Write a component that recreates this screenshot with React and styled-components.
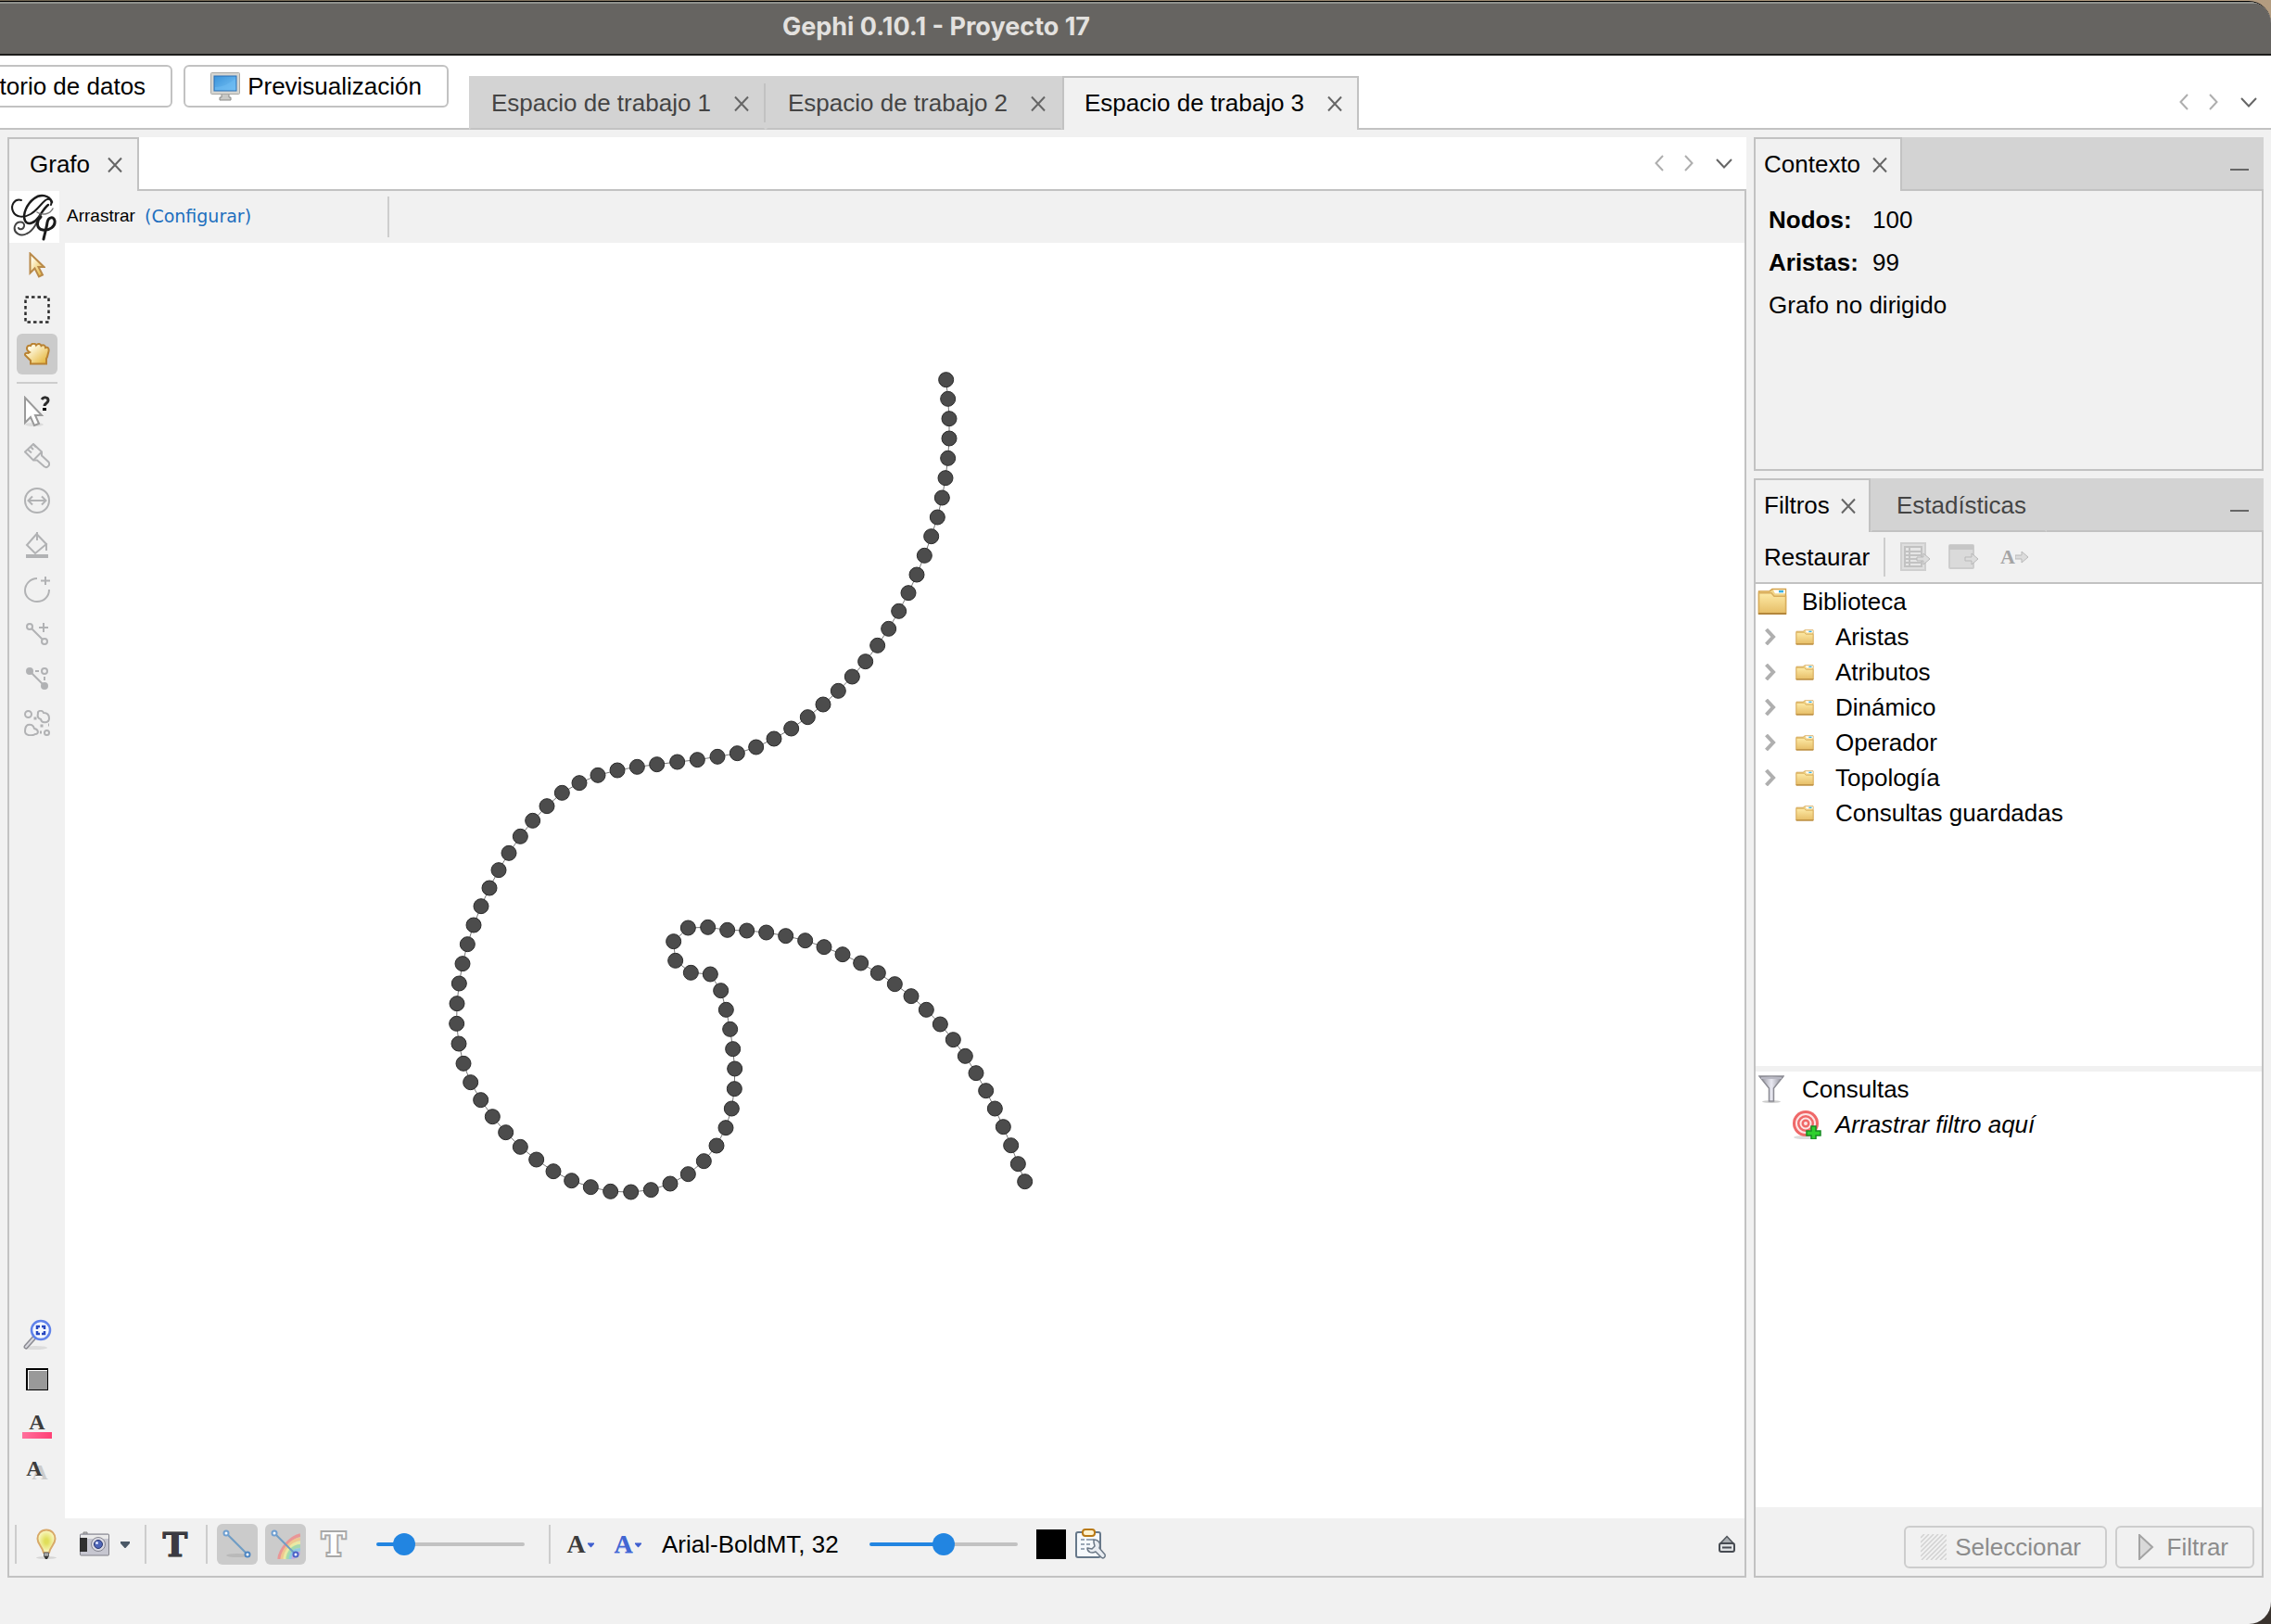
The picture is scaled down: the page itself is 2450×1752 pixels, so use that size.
import React, { useState } from "react";
import styled, { createGlobalStyle, css } from "styled-components";

const LINE = "#c2c2c2";
const FACE = "#f1f1f1";
const SHADE = "#d3d3d3";
const BLUE = "#2285e1";
const GLYPH = "#b1b2b4";

const GlobalStyle = createGlobalStyle`
  *, *::before, *::after { box-sizing: border-box; }
  body {
    margin: 0;
    font-family: "Liberation Sans", Arial, sans-serif;
    font-size: 26px;
    line-height: 30px;
    color: #000;
  }
  button, input { font: inherit; color: inherit; }
  svg { display: block; flex: none; }
`;

/* ---------- window ---------- */

const Desktop = styled.div`
  min-height: 100vh;
  padding-top: 1px;
  display: flex;
  background: linear-gradient(90deg, #6f6451, #b39c80) top / 100% 50% no-repeat, #3a332e;
`;

const Window = styled.div`
  flex: 1;
  min-width: 0;
  display: flex;
  flex-direction: column;
  overflow: hidden;
  border-top: 1px solid #000;
  border-radius: 0 24px 24px 0;
  background: ${FACE};
`;

const TitleBar = styled.header`
  height: 58px;
  padding-right: 430px;
  display: flex;
  align-items: center;
  justify-content: center;
  border-top: 2px solid #8f918c;
  border-bottom: 2px solid #1c1c1b;
  background: #666461;
`;

const Title = styled.h1`
  margin: 0 0 4px;
  font: 700 27px/30px Inter, sans-serif;
  color: #e3e1df;
`;

const TopBar = styled.div`
  height: 80px;
  display: flex;
  align-items: flex-end;
  background: #fff;
  box-shadow: inset 0 -2px ${LINE};
`;

const Modes = styled.nav`
  width: 484px;
  margin: 0 22px 24px 0;
  display: flex;
  justify-content: flex-end;
  gap: 12px;
  overflow: hidden;
`;

const PushButton = styled.button`
  flex: none;
  height: 46px;
  padding: 0 27px;
  display: flex;
  align-items: center;
  gap: 8px;
  border: 2px solid ${LINE};
  border-radius: 6px;
  background: #fff;
  white-space: nowrap;
`;

/* ---------- tabs ---------- */

const TabStrip = styled.div`
  flex: ${(p) => (p.$grow ? 1 : "none")};
  height: 58px;
  display: flex;
  background: ${(p) => (p.$shaded ? SHADE : "#fff")};
  box-shadow: inset 0 -2px ${LINE};
`;

const TabBox = styled.div`
  min-width: ${(p) => p.$width}px;
  padding: 0 ${(p) => (p.$wide ? 16 : 14)}px 2px ${(p) => (p.$wide ? 22 : 9)}px;
  display: flex;
  align-items: center;
  justify-content: space-between;
  border: 2px solid ${LINE};
  border-bottom: 0;
  background: ${FACE};
  ${(p) =>
    !p.$active &&
    css`
      padding-bottom: 0;
      border: 2px solid ${SHADE};
      border-bottom-color: ${LINE};
      background: ${SHADE};
      color: #444;
    `}
  ${(p) =>
    !p.$closable &&
    css`
      justify-content: center;
    `}
`;

const TabDivider = styled.span`
  align-self: flex-start;
  flex: none;
  width: 2px;
  height: 42px;
  margin: 8px 0 0 -2px;
  background: ${LINE};
`;

const TabButton = styled.button`
  padding: 0;
  border: 0;
  background: none;
  white-space: nowrap;
`;

const CloseButton = styled.button`
  padding: 2px 0 0;
  border: 0;
  background: none;
`;

const StripTools = styled.div`
  margin-left: auto;
  padding: 0 ${(p) => (p.$inset ? 4 : 2)}px 2px 0;
  height: 58px;
  display: flex;
  align-items: center;
`;

const StripButton = styled.button`
  width: ${(p) => (p.$wide ? 44 : 32)}px;
  height: 40px;
  padding: 0;
  display: grid;
  place-items: center;
  border: 0;
  background: none;
`;

/* ---------- panels ---------- */

const Workspace = styled.main`
  flex: 1;
  padding: 8px 8px 50px;
  display: grid;
  grid-template-columns: minmax(0, 1fr) 550px;
  gap: 8px;
`;

const SideColumn = styled.div`
  display: flex;
  flex-direction: column;
  gap: 8px;
`;

const Panel = styled.section`
  flex: ${(p) => (p.$height ? "none" : 1)};
  min-height: ${(p) => p.$height || 0}px;
  display: flex;
  flex-direction: column;
`;

const PanelBody = styled.div`
  flex: 1;
  display: flex;
  flex-direction: column;
  border: 2px solid ${LINE};
  border-top: 0;
`;

const ToolOptions = styled.div`
  height: 56px;
  display: flex;
  align-items: center;
  font-size: 19px;
  line-height: 24px;
`;

const LogoBox = styled.div`
  width: 54px;
  height: 56px;
  display: grid;
  place-items: center;
  background: #fff;
`;

const ToolName = styled.span`
  width: 74px;
  margin: 0 10px 2px 8px;
`;

const ConfigLink = styled.a`
  width: 262px;
  margin-bottom: 2px;
  font-family: "DejaVu Sans", sans-serif;
  color: #1d6fbe;
  text-decoration: none;
`;

const Rule = styled.span`
  flex: none;
  width: 2px;
  height: ${(p) => p.$height || 42}px;
  margin: 0 ${(p) => p.$space || 0}px;
  background: #cdcdcd;
`;

const GraphArea = styled.div`
  flex: 1;
  display: flex;
`;

const ToolColumn = styled.div`
  width: 60px;
  padding: 2px 8px 32px;
  display: flex;
  flex-direction: column;
  gap: 4px;
`;

const ColumnRule = styled.span`
  height: 2px;
  margin: 4px 0;
  background: #cdcdcd;
`;

const Spring = styled.span`
  flex: 1;
`;

const IconButton = styled.button`
  flex: none;
  width: ${(p) => p.$width || 44}px;
  height: 44px;
  padding: 0;
  display: grid;
  place-items: center;
  border: 0;
  border-radius: 6px;
  background: ${(p) => (p["aria-pressed"] ? "#cbcbcb" : "none")};
`;

const Canvas = styled.div`
  flex: 1;
  min-width: 0;
  display: grid;
  background: #fff;
`;

const BottomBar = styled.div`
  height: 62px;
  padding: 6px 6px 12px;
  display: flex;
  align-items: center;
`;

const Group = styled.div`
  display: flex;
  align-items: center;
  gap: ${(p) => p.$gap || 0}px;
`;

const Range = styled.input`
  appearance: none;
  width: 160px;
  height: 24px;
  margin: 0 ${(p) => p.$after}px 0 ${(p) => p.$before}px;
  background: none;
  &::-webkit-slider-runnable-track {
    height: 4px;
    border-radius: 2px;
    background: linear-gradient(90deg, ${BLUE} ${(p) => p.$fill}%, ${LINE} 0);
  }
  &::-webkit-slider-thumb {
    appearance: none;
    width: 24px;
    height: 24px;
    margin-top: -10px;
    border-radius: 50%;
    background: ${BLUE};
  }
`;

const FontButton = styled.button`
  padding: 0;
  margin-left: 18px;
  width: 194px;
  border: 0;
  background: none;
  white-space: nowrap;
  text-align: left;
`;

const Swatch = styled.button`
  width: 32px;
  height: 32px;
  margin-right: 4px;
  padding: 0;
  border: 0;
  background: #000;
`;

/* Serif letters used as toolbar symbols */
const Letter = styled.span`
  font: bold ${(p) => p.$size}px/${(p) => p.$size - 4}px ${(p) => (p.$slab ? '"DejaVu Serif"' : '"Liberation Serif"')}, serif;
  color: ${(p) => p.$color || "#3c3c3c"};
  text-shadow: ${(p) => p.$shadow || "none"};
  -webkit-text-stroke: ${(p) => p.$stroke || "0"};
  paint-order: stroke fill;
`;

const LetterStack = styled.span`
  padding-top: 4px;
  display: grid;
  justify-items: center;
  gap: 1px;
`;

const Underline = styled.span`
  width: 32px;
  height: 7px;
  background: linear-gradient(90deg, #ff6f9c, #ff4075);
`;

const LetterMenu = styled.span`
  display: flex;
  align-items: center;
  gap: ${(p) => p.$gap || 0}px;
`;

/* ---------- side panels ---------- */

const Facts = styled.dl`
  margin: 0;
  padding: 8px 14px;
  display: grid;
  grid-template-columns: 112px 1fr;
  line-height: 46px;
`;

const Fact = styled.dt`
  font-weight: bold;
`;

const Value = styled.dd`
  margin: 0;
`;

const Note = styled.dd`
  grid-column: 1 / -1;
  margin: 0;
`;

const FilterBar = styled.div`
  height: 56px;
  padding-left: 9px;
  display: flex;
  align-items: center;
  border-bottom: 2px solid ${LINE};
`;

const TextButton = styled.button`
  width: 129px;
  padding: 0;
  border: 0;
  background: none;
  text-align: left;
`;

const Tree = styled.ul`
  flex: ${(p) => p.$share} 1 0;
  margin: 0;
  padding: 0;
  list-style: none;
  background: #fff;
`;

const TreeRow = styled.li`
  height: 38px;
  display: grid;
  grid-template-columns: ${(p) => (p.$child ? "30px 56px 1fr" : "50px 1fr")};
  align-items: center;
  font-style: ${(p) => (p.$italic ? "italic" : "normal")};
`;

const Cell = styled.span`
  display: grid;
  place-items: center;
  width: ${(p) => p.$width}px;
`;

const Expander = styled.button`
  padding: 0;
  width: 32px;
  height: 30px;
  display: grid;
  place-items: center;
  border: 0;
  background: none;
`;

const Splitter = styled.div`
  height: 6px;
`;

const FilterFooter = styled.div`
  padding: 20px 8px 8px;
  display: flex;
  justify-content: flex-end;
  gap: 9px;
`;

const DisabledButton = styled(PushButton)`
  min-width: ${(p) => p.$width}px;
  padding: 0 26px 0 ${(p) => p.$start}px;
  justify-content: space-between;
  border-color: #cdcdcd;
  background: none;
  color: #8c8c8c;
`;

/* ---------- drawings ---------- */

const Gradients = () => (
  <svg width="0" height="0" aria-hidden="true">
    <defs>
      <linearGradient id="gold" x1="0" y1="0" x2="1" y2="1">
        <stop offset="0.2" stopColor="#fffbe6" />
        <stop offset="1" stopColor="#e2ad25" />
      </linearGradient>
      <linearGradient id="folder" x1="0" y1="0" x2="0" y2="1">
        <stop offset="0" stopColor="#fdeaa6" />
        <stop offset="1" stopColor="#e6bd66" />
      </linearGradient>
      <linearGradient id="screen" x1="0" y1="0" x2="1" y2="1">
        <stop offset="0" stopColor="#3a93da" />
        <stop offset="1" stopColor="#79c3f5" />
      </linearGradient>
      <linearGradient id="metal" x1="0" y1="0" x2="1" y2="0">
        <stop offset="0" stopColor="#85858f" />
        <stop offset="0.5" stopColor="#e9e9f2" />
        <stop offset="1" stopColor="#85858f" />
      </linearGradient>
      <radialGradient id="glow">
        <stop offset="0.2" stopColor="#e0de5a" />
        <stop offset="1" stopColor="#fbf8c6" />
      </radialGradient>
    </defs>
  </svg>
);

const Cross = () => (
  <svg width="16" height="18" viewBox="0 0 16 18" fill="none" stroke="#666" strokeWidth="2">
    <path d="M1 1.500L15 16.500M15 1.500L1 16.500" />
  </svg>
);

const Previous = () => (
  <svg width="10" height="18" viewBox="0 0 10 18" fill="none" stroke="#aeaeae" strokeWidth="2">
    <path d="M9 1L1.500 9L9 17" />
  </svg>
);

const Next = () => (
  <svg width="10" height="18" viewBox="0 0 10 18" fill="none" stroke="#aeaeae" strokeWidth="2">
    <path d="M1 1L8.500 9L1 17" />
  </svg>
);

const Down = () => (
  <svg width="18" height="11" viewBox="0 0 18 11" fill="none" stroke="#666" strokeWidth="2">
    <path d="M1 1L9 9.500L17 1" />
  </svg>
);

const Minimize = () => (
  <svg width="20" height="18" viewBox="0 0 20 18">
    <path d="M0 15h20v2H0z" fill="#666" />
  </svg>
);

const Caret = ({ color = "#4a5866", size = 10 }) => (
  <svg width={size} height={size} viewBox="0 0 10 10">
    <path d="M0 2h10v2L5.500 9h-1L0 4z" fill={color} />
  </svg>
);

const Monitor = () => (
  <svg width="32" height="32" viewBox="0 0 32 32">
    <path d="M12 24h8v4h2v3H10v-3h2z" fill="#c9c9c6" stroke="#8a8a87" />
    <rect x="0.5" y="1.5" width="31" height="23" rx="1" fill="#d6d6d2" stroke="#a9a9a5" />
    <rect x="4" y="5" width="24" height="16" fill="url(#screen)" stroke="#2a6fb4" />
    <path d="M5 17c9 0 15-4 22-9v12H5z" fill="#6dbbf2" opacity="0.6" />
  </svg>
);

const Logo = () => (
  <svg width="54" height="54" viewBox="0 0 54 54" fill="none" stroke="#1b1b1b" strokeLinecap="round">
    <path d="M13 9C6 7 1 14 4 21C7 28 16 28 23 24C30 20 34 13 39 9C43 6 47 9 45 14" strokeWidth="2" />
    <path d="M46 11C43 3 33 2 27 7C19 13 14 24 17 31C20 37 28 33 32 27C36 21 38 17 42 14" strokeWidth="2.500" />
    <path d="M47 18C44 24 36 26 30 22" strokeWidth="1.500" stroke="#777" />
    <path d="M34 24C30 33 26 42 19 45C12 49 4 44 6 37C8 31 17 31 16 37C15 41 11 41 10 39" strokeWidth="2" stroke="#444" />
    <path d="M34 27C29 31 29 40 36 41C44 42 50 37 49 31C48 26 42 27 41 33C40 40 38 46 37 51" strokeWidth="3" />
  </svg>
);

const Pointer = () => (
  <svg width="18" height="28" viewBox="0 0 18 28">
    <path d="M1.500 1.500v21l5-5l4.500 9l4-2l-4.500-8.500h6z" fill="url(#gold)" stroke="#b98a4a" strokeWidth="2" />
  </svg>
);

const Marquee = () => (
  <svg width="28" height="30" viewBox="0 0 28 30">
    <rect x="1.5" y="1.5" width="25" height="27" fill="none" stroke="#2b2b2b" strokeWidth="2.500" strokeDasharray="3.500 3" />
  </svg>
);

const Hand = () => (
  <svg width="28" height="24" viewBox="0 0 28 24">
    <path
      d="M7 22.500V19L1.500 13.500C0 12 2 10 4.500 11L6 10C1 7 3 2 7 3C8 0 12 0 13 2.500C15 0 18 1 18.500 3C21 1 23 3 23 5C26 4 27 6 26.500 9L25 15l-1 2v5.500z"
      fill="url(#gold)"
      stroke="#b98232"
      strokeWidth="2"
    />
  </svg>
);

const HelpPointer = () => (
  <svg width="30" height="34" viewBox="0 0 30 34">
    <ellipse cx="12" cy="31" rx="10" ry="2" fill="#ddd" />
    <path d="M2 2v27l6-6l4 9l5-2l-4-9h7z" fill="#fff" stroke="#9a9a9a" strokeWidth="2" />
    <path d="M20 4c2-3 7-3 7 1c0 3-4 3-4 6" fill="none" stroke="#2c2c2c" strokeWidth="3" />
    <path d="M21 13h4v3h-4z" fill="#000" />
  </svg>
);

const Line = ({ children }) => (
  <svg width="28" height="28" viewBox="0 0 28 28" fill="none" stroke={GLYPH} strokeWidth="2">
    {children}
  </svg>
);

const Brush = () => (
  <Line>
    <path d="M1 9.500L10 1l9 8.500v4l7.500 7c2 3-1.500 7-4.500 5l-8-7h-4z" />
    <path d="M19 9.500l-9 9M4 7l4 3.500M7 4l3 3M10 1.500l3 3" />
  </Line>
);

const Sizer = () => (
  <Line>
    <circle cx="14" cy="14" r="13" />
    <path d="M4.500 14h19M9 9.500L4.500 14L9 18.500M19 9.500l4.500 4.500L19 18.500" />
  </Line>
);

const Bucket = () => (
  <Line>
    <path d="M13.500 2L24 13L12 23L3 14zM14 0v9M24 12v8" />
    <path d="M2 26h24" strokeWidth="4" />
  </Line>
);

const AddNode = () => (
  <Line>
    <path d="M14 2C7 2 1 8 1 15s6 12 13 12s13-5 13-13M18 4.500h10M23 0v9" />
  </Line>
);

const AddEdge = () => (
  <Line>
    <circle cx="6" cy="6" r="3" />
    <circle cx="22" cy="22" r="3" />
    <path d="M8 8l12 12M16 7h10M21 2v10" />
  </Line>
);

const PathTool = () => (
  <Line>
    <circle cx="6" cy="6" r="3" fill={GLYPH} />
    <circle cx="22" cy="22" r="3" fill={GLYPH} />
    <circle cx="22" cy="6" r="3" />
    <path d="M8 8l12 12M12 6h4M22 12v4" />
  </Line>
);

const Clusters = () => (
  <Line>
    <circle cx="4.500" cy="4.500" r="3.500" />
    <circle cx="24.500" cy="24.500" r="2.500" />
    <path d="M15 4c-1-4 5-4 6-1c4 0 6 2 6 6c0 5-8 6-9 1c-3-1-4-3-3-6zM4 16c3-1 6 0 7 4c5 1 5 6 1 6c-3 2-11 2-11-3c0-4 1-6 3-7z" />
    <path d="M10.500 9h3M17.500 17h3M17 24h2M26 16h1" strokeWidth="3" />
  </Line>
);

const CenterGraph = () => (
  <svg width="32" height="34" viewBox="0 0 32 34">
    <ellipse cx="14" cy="31" rx="13" ry="2" fill="#dcdcdc" />
    <path d="M13 20L4 30" stroke="#8b8b92" strokeWidth="5" strokeLinecap="round" />
    <path d="M13 20L4 30" stroke="#d8d8de" strokeWidth="2" strokeLinecap="round" />
    <circle cx="20" cy="12" r="10" fill="#f4f8ff" stroke="#5f82ea" strokeWidth="2.500" />
    <path d="M16 11V8h3M21 8h3v3M24 13v3h-3M19 16h-3v-3" fill="none" stroke="#2647c0" strokeWidth="2.500" />
  </svg>
);

const ColorBox = () => (
  <svg width="24" height="24" viewBox="0 0 24 24">
    <rect width="24" height="24" fill="#000" />
    <rect x="2" y="2" width="21" height="21" fill="#fff" />
    <rect x="3" y="3" width="20" height="20" fill="#999" />
  </svg>
);

const Bulb = () => (
  <svg width="24" height="34" viewBox="0 0 24 34">
    <ellipse cx="12" cy="31.500" rx="11" ry="1.500" fill="#d5d5d5" />
    <path d="M12 1.500C6 1.500 2.500 6 2.500 11c0 6 5 8 6.500 15h6c1.500-7 6.500-9 6.500-15c0-5-3.500-9.500-9.500-9.500z" fill="url(#glow)" stroke="#d8a968" strokeWidth="2" />
    <path d="M9.500 26h5v4h-5z" fill="#aaa" stroke="#666" />
    <path d="M9.500 30h5l-1.500 3h-2z" fill="#333" />
  </svg>
);

const Camera = () => (
  <svg width="32" height="28" viewBox="0 0 32 28">
    <path d="M4 1h4v3H4z" fill="#bbb" stroke="#888" />
    <rect x="0.5" y="3" width="31" height="23" rx="1" fill="#c6c6d0" stroke="#808088" />
    <path d="M1 4h30v4H1z" fill="#eaeaea" />
    <path d="M0 7h8v15H0z" fill="#303030" />
    <circle cx="20" cy="14" r="7.500" fill="#d9d9e2" stroke="#85858f" />
    <circle cx="20" cy="14" r="4.500" fill="#4f66b8" stroke="#2b3770" />
    <circle cx="18.500" cy="12.500" r="1.500" fill="#dfe6ff" />
  </svg>
);

const RAINBOW = ["#ee8d8d", "#f4c787", "#eeee9d", "#9ddca8", "#86c9e6", "#c3a8e0"];

const EdgeIcon = ({ rainbow }) => (
  <svg width="32" height="32" viewBox="0 0 32 32" fill="none">
    {!rainbow && <ellipse cx="16" cy="28" rx="12" ry="2" fill="#b9b9b9" />}
    {rainbow &&
      RAINBOW.map((color, i) => (
        <path
          key={color}
          d={`M${9 + i * 3} 32C${10 + i * 3} ${22 + i} ${20 + i} ${9 + i * 3} 32 ${6 + i * 4}`}
          stroke={color}
          strokeWidth="3.500"
          opacity="0.85"
        />
      ))}
    <path d="M5 5l22 22" stroke="#6f9cc4" strokeWidth="2" />
    <circle cx="4" cy="4" r="2.500" fill="#fff" stroke="#6f9fd0" strokeWidth="2" />
    <circle cx="27" cy="27" r="2.500" fill="#fff" stroke={rainbow ? "#4a62c8" : "#4d86c2"} strokeWidth="2" />
  </svg>
);

const Clipboard = () => (
  <svg width="34" height="34" viewBox="0 0 34 34">
    <rect x="2" y="4" width="26" height="27" rx="2" fill="#f6f9fc" stroke="#66788a" strokeWidth="2" />
    <path d="M7 12h4M7 17h4M7 22h4M13 12h8M13 17h4" stroke="#9aa7b5" strokeWidth="2" />
    <rect x="9" y="1" width="13" height="7" rx="3" fill="#fff3cf" stroke="#b97a16" strokeWidth="2" />
    <path
      d="M21 12C26 12 29 16 27 21L33 28C34 31 31 33 29 31L23 25C19 27 14 26 14 21L19 22L22 19L21 15z"
      fill="#e9edf2"
      stroke="#6b7886"
      strokeWidth="1.500"
      strokeLinejoin="round"
    />
  </svg>
);

const Eject = () => (
  <svg width="20" height="20" viewBox="0 0 20 20">
    <path d="M10 1.500L17 9H3z" fill="#a9adb1" stroke="#50555b" strokeWidth="1.500" />
    <rect x="2" y="9" width="16" height="9" rx="2" fill="#dfe1e3" stroke="#474b52" strokeWidth="2" />
    <path d="M5 13.500h10" stroke="#474b52" strokeWidth="2" />
  </svg>
);

const Arrow = ({ x, y }) => (
  <path d={`M${x} ${y - 2}h7v-4l7 6l-7 6v-4h-7z`} fill="#dcdcdc" stroke="#b9b9b9" />
);

const ColumnsIcon = () => (
  <svg width="34" height="32" viewBox="0 0 34 32">
    <rect x="1" y="1" width="26" height="29" fill="#dedede" stroke="#cfcfcf" strokeWidth="2" />
    <path d="M5 5h18v21H5zM5 10h18M5 14h18M5 18h18M5 22h18M10 5v21" fill="#e6e6e6" stroke="#c2c2c2" strokeWidth="2" />
    <Arrow x={18} y={18} />
  </svg>
);

const WindowIcon = () => (
  <svg width="34" height="32" viewBox="0 0 34 32">
    <rect x="1" y="3" width="26" height="25" rx="1" fill="#dadada" stroke="#cdcdcd" strokeWidth="2" />
    <path d="M1 3h26v5H1z" fill="#c6c6c6" />
    <Arrow x={18} y={18} />
  </svg>
);

const ArrowIcon = () => (
  <svg width="14" height="16" viewBox="1 0 14 16">
    <Arrow x={1} y={8} />
  </svg>
);

const Folder = ({ width = 32, height = 30 }) => (
  <svg width={width} height={height} viewBox="0 0 32 31" preserveAspectRatio="none">
    <path d="M1.500 29V4H13l3-2.500h14.500V29z" fill="#f2d68a" stroke="#d3a24e" strokeWidth="1.500" />
    <path d="M17 2.500h13v4H19z" fill="#fff" />
    <path d="M23 3h5v2.500h-5z" fill="#36b2e4" />
    <path d="M1.500 29V6H15l3 3.500h12.500V29z" fill="url(#folder)" stroke="#d9ae5d" strokeWidth="1.500" />
    <path d="M1 29h30" stroke="#b1843a" strokeWidth="2" />
  </svg>
);

const Chevron = () => (
  <svg width="12" height="18" viewBox="0 0 12 18" fill="none" stroke="#afafaf" strokeWidth="4">
    <path d="M1.500 1L9 9L1.500 17" />
  </svg>
);

const Funnel = () => (
  <svg width="28" height="30" viewBox="0 0 28 30">
    <ellipse cx="14" cy="28.500" rx="10" ry="1.500" fill="#ccc" />
    <path d="M1 1h26L16.500 14v14h-5V14z" fill="url(#metal)" stroke="#8c8c94" strokeWidth="1.500" />
    <path d="M3 3h22" stroke="#b9b9c4" strokeWidth="2" />
  </svg>
);

const Target = () => (
  <svg width="32" height="32" viewBox="0 0 32 32">
    <ellipse cx="14" cy="30" rx="12" ry="2" fill="#ddd" />
    <circle cx="15" cy="15" r="14" fill="#ef6868" />
    <circle cx="15" cy="15" r="10" fill="none" stroke="#fde4e4" strokeWidth="2" />
    <circle cx="15" cy="15" r="5.500" fill="none" stroke="#fde4e4" strokeWidth="2" />
    <circle cx="15" cy="15" r="2" fill="#fde4e4" />
    <path d="M21 18h5v5h5v5h-5v4h-5v-4h-5v-5h5z" fill="#2fd02f" stroke="#198a24" strokeWidth="1.500" />
  </svg>
);

const Hatch = () => (
  <svg width="28" height="28" viewBox="0 0 28 28" stroke="#d2d2d2" strokeWidth="1.500">
    <path d="M0 4l4-4M0 9l9-9M0 14L14 0M0 19L19 0M0 24L24 0M1 28L28 1M6 28L28 6M11 28l17-17M16 28l12-12M21 28l7-7M26 28l2-2" />
  </svg>
);

const Play = () => (
  <svg width="18" height="28" viewBox="0 0 18 28">
    <path d="M2 1v26L16 14z" fill="#d9d9d9" stroke="#a3a3a3" strokeWidth="2" />
  </svg>
);

/* ---------- graph ---------- */

/* Node positions of the chain, in graph units (three per pixel) */
const NODES = [
  [2852, 443], [2858, 505], [2862, 569], [2862, 633], [2858, 697], [2850, 761], [2839, 825], [2824, 888],
  [2804, 950], [2782, 1012], [2757, 1074], [2730, 1133], [2699, 1192], [2666, 1249], [2630, 1303], [2591, 1355],
  [2548, 1404], [2503, 1450], [2454, 1494], [2404, 1535], [2351, 1572], [2295, 1605], [2237, 1632], [2176, 1652],
  [2112, 1663], [2047, 1673], [1982, 1680], [1916, 1688], [1852, 1696], [1788, 1707], [1725, 1723], [1665, 1748],
  [1609, 1780], [1560, 1823], [1514, 1870], [1474, 1921], [1437, 1975], [1404, 2030], [1374, 2088], [1347, 2147],
  [1323, 2208], [1303, 2270], [1287, 2333], [1276, 2397], [1269, 2462], [1268, 2527], [1275, 2592], [1290, 2656],
  [1313, 2717], [1346, 2774], [1384, 2828], [1427, 2879], [1474, 2926], [1526, 2967], [1581, 3005], [1640, 3035],
  [1702, 3056], [1766, 3070], [1832, 3072], [1897, 3065], [1959, 3045], [2017, 3014], [2068, 2972], [2109, 2922],
  [2139, 2864], [2158, 2802], [2167, 2738], [2168, 2673], [2162, 2609], [2153, 2545], [2140, 2482], [2123, 2420],
  [2089, 2367], [2026, 2362], [1976, 2323], [1970, 2261], [2017, 2217], [2081, 2215], [2144, 2224], [2207, 2226],
  [2270, 2232], [2333, 2243], [2396, 2258], [2457, 2279], [2517, 2303], [2576, 2331], [2632, 2363], [2686, 2399],
  [2739, 2438], [2788, 2482], [2833, 2529], [2875, 2579], [2914, 2632], [2949, 2687], [2981, 2744], [3010, 2802],
  [3037, 2861], [3062, 2921], [3085, 2981], [3107, 3038],
];

const Graph = () => (
  <svg width="100%" height="100%" role="img" aria-label="Grafo">
    <g transform={`scale(${1 / 3})`}>
      <polyline points={NODES.map((n) => n.join(",")).join(" ")} fill="none" stroke="#777" strokeWidth="3" />
      {NODES.map(([x, y]) => (
        <circle key={`${x}-${y}`} cx={x} cy={y} r="24" fill="#4c4c4c" stroke="#2b2b2b" strokeWidth="3" />
      ))}
    </g>
  </svg>
);

/* ---------- composition ---------- */

const Tab = ({ label, active, width, wide, closable = true, onSelect }) => (
  <TabBox $active={active} $width={width} $wide={wide} $closable={closable}>
    <TabButton role="tab" aria-selected={!!active} onClick={onSelect}>
      {label}
    </TabButton>
    {closable && (
      <CloseButton aria-label={`Cerrar ${label}`}>
        <Cross />
      </CloseButton>
    )}
  </TabBox>
);

const TabScroller = () => (
  <StripTools>
    <StripButton aria-label="Anterior"><Previous /></StripButton>
    <StripButton aria-label="Siguiente"><Next /></StripButton>
    <StripButton $wide aria-label="Lista"><Down /></StripButton>
  </StripTools>
);

const MinimizeTools = () => (
  <StripTools $inset>
    <StripButton $wide aria-label="Minimizar"><Minimize /></StripButton>
  </StripTools>
);

const Slider = ({ label, initial, before, after }) => {
  const [value, setValue] = useState(initial);
  return (
    <Range
      type="range"
      aria-label={label}
      min="0"
      max="100"
      value={value}
      $fill={value}
      $before={before}
      $after={after}
      onChange={(e) => setValue(Number(e.target.value))}
    />
  );
};

const WORKSPACES = ["Espacio de trabajo 1", "Espacio de trabajo 2", "Espacio de trabajo 3"];
const FILTERS = ["Aristas", "Atributos", "Dinámico", "Operador", "Topología"];
const SELECT_TOOLS = [["Seleccionar", Pointer], ["Rectángulo", Marquee], ["Arrastrar", Hand]];
const EDIT_TOOLS = [
  ["Información", HelpPointer], ["Pincel", Brush], ["Tamaño", Sizer], ["Colorear", Bucket],
  ["Nodo", AddNode], ["Arista", AddEdge], ["Camino", PathTool], ["Calor", Clusters],
];

function GraphPanel() {
  const [tool, setTool] = useState("Arrastrar");
  const toolButton = ([name, Icon]) => (
    <IconButton key={name} aria-label={name} aria-pressed={tool === name} onClick={() => setTool(name)}>
      <Icon />
    </IconButton>
  );
  return (
    <Panel>
      <TabStrip role="tablist">
        <Tab label="Grafo" active width={142} wide />
        <TabScroller />
      </TabStrip>
      <PanelBody>
        <ToolOptions>
          <LogoBox><Logo /></LogoBox>
          <ToolName>Arrastrar</ToolName>
          <ConfigLink href="#configurar">(Configurar)</ConfigLink>
          <Rule $height={44} />
        </ToolOptions>
        <GraphArea>
          <ToolColumn>
            {SELECT_TOOLS.map(toolButton)}
            <ColumnRule />
            {EDIT_TOOLS.map(toolButton)}
            <Spring />
            <IconButton aria-label="Centrar"><CenterGraph /></IconButton>
            <IconButton aria-label="Restablecer colores"><ColorBox /></IconButton>
            <IconButton aria-label="Color de etiquetas">
              <LetterStack>
                <Letter $size={24}>A</Letter>
                <Underline />
              </LetterStack>
            </IconButton>
            <IconButton $width={38} aria-label="Visibilidad de etiquetas">
              <Letter $size={24} $shadow="6px 4px #ccc">A</Letter>
            </IconButton>
          </ToolColumn>
          <Canvas><Graph /></Canvas>
        </GraphArea>
        <BottomBar>
          <Rule />
          <Group>
            <IconButton $width={64} aria-label="Fondo"><Bulb /></IconButton>
            <IconButton $width={40} aria-label="Captura"><Camera /></IconButton>
            <IconButton $width={26} aria-label="Opciones de captura"><Caret /></IconButton>
          </Group>
          <Rule $space={8} />
          <IconButton $width={46} aria-label="Etiquetas de nodo">
            <Letter $slab $size={36} $color="#3b3b42" $stroke="1px #1c1c20">T</Letter>
          </IconButton>
          <Rule $space={10} />
          <Group $gap={8}>
            <IconButton aria-label="Aristas" aria-pressed><EdgeIcon /></IconButton>
            <IconButton aria-label="Color de aristas" aria-pressed><EdgeIcon rainbow /></IconButton>
            <IconButton aria-label="Etiquetas de arista">
              <Letter $slab $size={34} $color="#fdfdfd" $stroke="4px #a8a8a8">T</Letter>
            </IconButton>
          </Group>
          <Slider label="Grosor de aristas" initial={13} before={24} after={26} />
          <Rule />
          <Group>
            <IconButton $width={64} aria-label="Tamaño de texto">
              <LetterMenu $gap={2}><Letter $size={28}>A</Letter><Caret size={7} color="#3f5fd0" /></LetterMenu>
            </IconButton>
            <IconButton $width={38} aria-label="Color de texto">
              <LetterMenu $gap={2}><Letter $size={28} $color="#4266d2" $shadow="0 1px #9db2ee">A</Letter><Caret size={7} color="#3f5fd0" /></LetterMenu>
            </IconButton>
          </Group>
          <FontButton>Arial-BoldMT, 32</FontButton>
          <Slider label="Tamaño de etiquetas" initial={50} before={30} after={20} />
          <Swatch aria-label="Color" />
          <IconButton aria-label="Configurar etiquetas"><Clipboard /></IconButton>
          <Spring />
          <IconButton $width={26} aria-label="Expandir"><Eject /></IconButton>
        </BottomBar>
      </PanelBody>
    </Panel>
  );
}

function ContextPanel() {
  return (
    <Panel $height={360}>
      <TabStrip $shaded role="tablist">
        <Tab label="Contexto" active width={160} />
        <MinimizeTools />
      </TabStrip>
      <PanelBody>
        <Facts>
          <Fact>Nodos:</Fact>
          <Value>100</Value>
          <Fact>Aristas:</Fact>
          <Value>99</Value>
          <Note>Grafo no dirigido</Note>
        </Facts>
      </PanelBody>
    </Panel>
  );
}

function FiltersPanel() {
  return (
    <Panel>
      <TabStrip $shaded role="tablist">
        <Tab label="Filtros" active width={126} />
        <Tab label="Estadísticas" wide closable={false} width={190} />
        <MinimizeTools />
      </TabStrip>
      <PanelBody>
        <FilterBar>
          <TextButton>Restaurar</TextButton>
          <Rule />
          <Group>
            <IconButton $width={66} disabled aria-label="Exportar columna"><ColumnsIcon /></IconButton>
            <IconButton $width={38} disabled aria-label="Exportar a espacio de trabajo"><WindowIcon /></IconButton>
            <IconButton $width={70} disabled aria-label="Exportar etiquetas">
              <LetterMenu><Letter $size={22} $color="#a5a5a5">A</Letter><ArrowIcon /></LetterMenu>
            </IconButton>
          </Group>
        </FilterBar>
        <Tree $share={520}>
          <TreeRow><Cell $width={36}><Folder /></Cell>Biblioteca</TreeRow>
          {FILTERS.map((name) => (
            <TreeRow key={name} $child>
              <Expander aria-label={`Expandir ${name}`}><Chevron /></Expander>
              <Cell $width={46}><Folder width={20} height={17} /></Cell>
              {name}
            </TreeRow>
          ))}
          <TreeRow $child>
            <span />
            <Cell $width={46}><Folder width={20} height={17} /></Cell>
            Consultas guardadas
          </TreeRow>
        </Tree>
        <Splitter />
        <Tree $share={470}>
          <TreeRow><Cell $width={34}><Funnel /></Cell>Consultas</TreeRow>
          <TreeRow $child $italic>
            <span />
            <Cell $width={50}><Target /></Cell>
            Arrastrar filtro aquí
          </TreeRow>
        </Tree>
        <FilterFooter>
          <DisabledButton disabled $width={219} $start={16}><Hatch />Seleccionar</DisabledButton>
          <DisabledButton disabled $width={150} $start={22}><Play />Filtrar</DisabledButton>
        </FilterFooter>
      </PanelBody>
    </Panel>
  );
}

export default function App() {
  const [current, setCurrent] = useState(2);
  return (
    <Desktop>
      <GlobalStyle />
      <Gradients />
      <Window>
        <TitleBar>
          <Title>Gephi 0.10.1 - Proyecto 17</Title>
        </TitleBar>
        <TopBar>
          <Modes>
            <PushButton>Laboratorio de datos</PushButton>
            <PushButton><Monitor />Previsualización</PushButton>
          </Modes>
          <TabStrip role="tablist" $grow>
            {WORKSPACES.map((name, i) => (
              <React.Fragment key={name}>
                <Tab label={name} active={i === current} width={320} wide onSelect={() => setCurrent(i)} />
                {i < WORKSPACES.length - 1 && i !== current && i + 1 !== current && <TabDivider />}
              </React.Fragment>
            ))}
            <TabScroller />
          </TabStrip>
        </TopBar>
        <Workspace>
          <GraphPanel />
          <SideColumn>
            <ContextPanel />
            <FiltersPanel />
          </SideColumn>
        </Workspace>
      </Window>
    </Desktop>
  );
}
